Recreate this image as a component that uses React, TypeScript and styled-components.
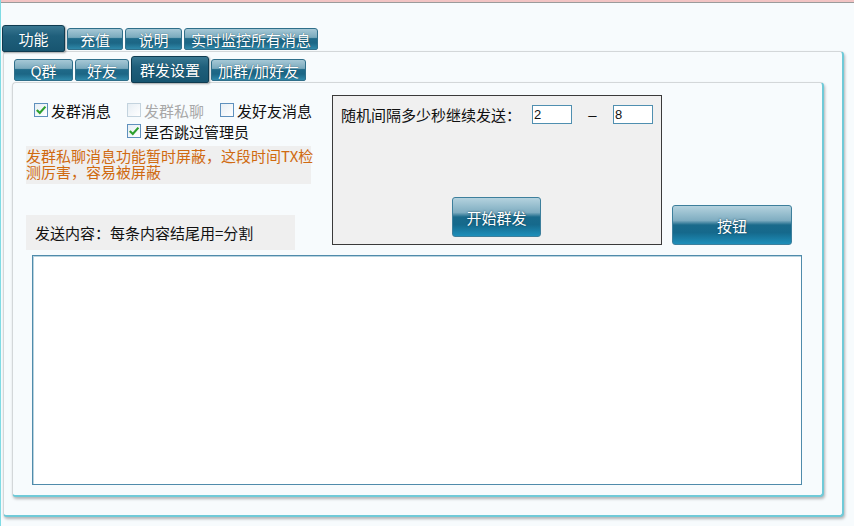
import React from 'react'
import styled, { createGlobalStyle, css } from 'styled-components'

const GlobalStyle = createGlobalStyle`
  html, body {
    margin: 0;
    padding: 0;
    background: #f7fbfd;
  }
  body {
    font-family: "Noto Sans CJK SC", "Noto Sans", sans-serif;
    font-size: 15px;
    color: #111;
  }
`

const Page = styled.div`
  width: 854px;
  height: 526px;
  box-sizing: border-box;
  border-left: 1px solid #7fdbe4;
  background: #f7fbfd;
  overflow: hidden;
`

const TopEdge = styled.div`
  height: 4px;
  background: linear-gradient(#f2c4c4 0 2px, #9b9b9b 2px 3px, transparent 3px);
`

const TabRow = styled.div<{ $top: number; $left: number }>`
  display: flex;
  align-items: flex-end;
  gap: 2px;
  margin-top: ${(p) => p.$top}px;
  padding-left: ${(p) => p.$left}px;
  position: relative;
  z-index: 1;
`

const Tab = styled.div<{ $active?: boolean; $w: number }>`
  width: ${(p) => p.$w}px;
  box-sizing: border-box;
  display: flex;
  align-items: center;
  justify-content: center;
  color: #fff;
  font-size: 15px;
  line-height: 1;
  text-shadow: 0 0 1px #0d3a4f;
  border-radius: 3px 3px 2px 2px;
  ${(p) =>
    p.$active
      ? css`
          height: 27px;
          margin-bottom: -1px;
          border: 1px solid #0f3b50;
          background: linear-gradient(#3a7892 0%, #1f5f7b 40%, #175570 100%);
          box-shadow: 1px 1px 2px rgba(0, 0, 0, 0.35);
        `
      : css`
          height: 22px;
          margin-bottom: 1px;
          border: 1px solid #2f6f8a;
          background: linear-gradient(#a6c8d6 0%, #7aaabd 42%, #1f6a89 48%, #1c6685 70%, #2f89aa 100%);
        `}
`

const OuterPanel = styled.div`
  margin-left: 2px;
  width: 841px;
  height: 466px;
  box-sizing: border-box;
  border: 1px solid #d3d7d9;
  border-right: 2px solid #6fcad8;
  border-bottom: 2px solid #6fcad8;
  border-radius: 4px;
  box-shadow: 1px 2px 3px rgba(0, 0, 0, 0.28);
  background: #f7fbfd;
`

const InnerPanel = styled.div`
  margin-left: 8px;
  width: 812px;
  height: 415px;
  box-sizing: border-box;
  border: 1px solid #d3d7d9;
  border-right: 2px solid #6fcad8;
  border-bottom: 2px solid #6fcad8;
  border-radius: 4px;
  box-shadow: 1px 2px 3px rgba(0, 0, 0, 0.28);
  background: #f7fbfd;
  padding: 12px 0 0 13px;
`

const TopArea = styled.div`
  display: flex;
  align-items: flex-end;
`

const LeftCol = styled.div`
  width: 285px;
  display: flex;
  flex-direction: column;
  padding-top: 5px;
  margin-right: 21px;
`

const CheckRow = styled.div<{ $indent: number }>`
  display: flex;
  align-items: center;
  gap: 16px;
  height: 20px;
  margin-left: ${(p) => p.$indent}px;
  & + & {
    margin-top: 1px;
  }
`

const CheckItem = styled.label<{ $disabled?: boolean }>`
  display: flex;
  align-items: center;
  gap: 3px;
  white-space: nowrap;
  color: ${(p) => (p.$disabled ? '#a8a8a8' : '#111')};
`

const Box = styled.span<{ $disabled?: boolean }>`
  width: 14px;
  height: 14px;
  box-sizing: border-box;
  border: 1px solid ${(p) => (p.$disabled ? '#c3d3de' : '#5e90bd')};
  background: linear-gradient(135deg, #e6eef4, #fff);
  display: flex;
  align-items: center;
  justify-content: center;
`

const Notice = styled.div`
  margin-top: 5px;
  height: 38px;
  box-sizing: border-box;
  padding-top: 2px;
  background: #efefef;
  color: #d06a10;
  font-size: 15px;
  line-height: 16px;
  white-space: nowrap;
`

const ContentLabel = styled.div`
  margin-top: 31px;
  width: 269px;
  height: 35px;
  box-sizing: border-box;
  padding-left: 9px;
  display: flex;
  align-items: center;
  background: #efefef;
`

const GroupBox = styled.div`
  width: 330px;
  height: 150px;
  box-sizing: border-box;
  border: 1px solid #3a3a3a;
  background: #f0f0f0;
  padding: 9px 0 7px 8px;
  display: flex;
  flex-direction: column;
  justify-content: space-between;
  align-self: flex-start;
`

const IntervalRow = styled.div`
  display: flex;
  align-items: center;
  height: 19px;
`

const IntervalLabel = styled.span`
  width: 191px;
  white-space: nowrap;
`

const NumInput = styled.input`
  width: 40px;
  height: 19px;
  box-sizing: border-box;
  border: 1px solid #4f8fb0;
  padding: 0 1px;
  font-family: "Liberation Sans", sans-serif;
  font-size: 13px;
  color: #111;
  background: #fff;
  outline: none;
`

const Dash = styled.span`
  width: 41px;
  text-align: center;
  font-family: "Liberation Sans", sans-serif;
`

const BlueButton = styled.button<{ $w: number }>`
  width: ${(p) => p.$w}px;
  height: 40px;
  border: 1px solid #3d7f9c;
  border-radius: 3px;
  background: linear-gradient(#b4d2de 0%, #7fadc1 38%, #1a6a8b 50%, #15698c 70%, #1e8fba 100%);
  color: #fff;
  font-family: "Noto Sans CJK SC", sans-serif;
  font-size: 15px;
  text-shadow: 0 0 2px #0d3a4f;
  padding: 0;
  cursor: pointer;
`

const GroupButtonRow = styled.div`
  display: flex;
  justify-content: center;
  padding-right: 9px;
`

const SideButton = styled(BlueButton)`
  margin-left: 10px;
  margin-bottom: 5px;
`

const ContentArea = styled.textarea`
  display: block;
  margin: 5px 0 0 6px;
  width: 770px;
  height: 230px;
  box-sizing: border-box;
  border: 1px solid #4f8bab;
  box-shadow: inset 1px 1px 0 #b9d3df;
  background: #fff;
  resize: none;
  outline: none;
`

function Check({ checked, disabled }: { checked?: boolean; disabled?: boolean }) {
  return (
    <Box $disabled={disabled}>
      {checked && (
        <svg width="12" height="12" viewBox="0 0 12 12">
          <path d="M1.8 6 L4.8 9 L10.4 2.6" fill="none" stroke="#2ea02e" strokeWidth="2.2" />
        </svg>
      )}
    </Box>
  )
}

export default function App() {
  return (
    <>
      <GlobalStyle />
      <Page>
        <TopEdge />
        <TabRow $top={21} $left={1}>
          <Tab $active $w={63}>功能</Tab>
          <Tab $w={56}>充值</Tab>
          <Tab $w={57}>说明</Tab>
          <Tab $w={134}>实时监控所有消息</Tab>
        </TabRow>
        <OuterPanel>
          <TabRow $top={4} $left={10}>
            <Tab $w={59}>Q群</Tab>
            <Tab $w={54}>好友</Tab>
            <Tab $active $w={78}>群发设置</Tab>
            <Tab $w={95}>加群/加好友</Tab>
          </TabRow>
          <InnerPanel>
            <TopArea>
              <LeftCol>
                <CheckRow $indent={8}>
                  <CheckItem>
                    <Check checked />
                    发群消息
                  </CheckItem>
                  <CheckItem $disabled>
                    <Check disabled />
                    发群私聊
                  </CheckItem>
                  <CheckItem>
                    <Check />
                    发好友消息
                  </CheckItem>
                </CheckRow>
                <CheckRow $indent={101}>
                  <CheckItem>
                    <Check checked />
                    是否跳过管理员
                  </CheckItem>
                </CheckRow>
                <Notice>
                  发群私聊消息功能暂时屏蔽，这段时间TX检
                  <br />
                  测厉害，容易被屏蔽
                </Notice>
                <ContentLabel>发送内容：每条内容结尾用=分割</ContentLabel>
              </LeftCol>
              <GroupBox>
                <IntervalRow>
                  <IntervalLabel>随机间隔多少秒继续发送：</IntervalLabel>
                  <NumInput defaultValue="2" />
                  <Dash>–</Dash>
                  <NumInput defaultValue="8" />
                </IntervalRow>
                <GroupButtonRow>
                  <BlueButton $w={89}>开始群发</BlueButton>
                </GroupButtonRow>
              </GroupBox>
              <SideButton $w={120}>按钮</SideButton>
            </TopArea>
            <ContentArea />
          </InnerPanel>
        </OuterPanel>
      </Page>
    </>
  )
}
